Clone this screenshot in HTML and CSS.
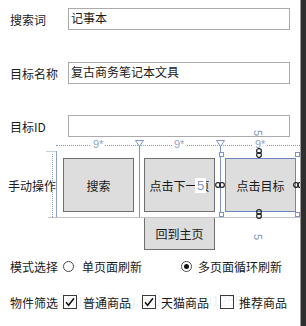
FILE: index.html
```html
<!DOCTYPE html>
<html lang="zh-CN">
<head>
    <meta charset="UTF-8">
    <title>任务设置</title>
    <link rel="stylesheet" href="styles.css">
</head>
<body>
<div class="page">
    <div class="field">
        <span class="field-label">搜索词</span>
        <div class="field-input">记事本</div>
    </div>
    <div class="field field-gap">
        <span class="field-label">目标名称</span>
        <div class="field-input">复古商务笔记本文具</div>
    </div>
    <div class="field field-gap-sm">
        <span class="field-label">目标ID</span>
        <div class="field-input"></div>
    </div>

    <div class="manual">
        <div class="manual-label">手动操作</div>
        <div class="manual-grid">
            <div class="btn">搜索</div>
            <div class="btn">点击下一页</div>
            <div class="btn btn-selected">点击目标</div>
            <div class="btn btn-home">回到主页</div>
        </div>
    </div>

    <div class="choice-row">
        <span class="choice-label">模式选择</span>
        <label class="choice choice-radio-1"><span class="radio"></span>单页面刷新</label>
        <label class="choice choice-radio-2"><span class="radio radio-on"><span class="radio-dot"></span></span>多页面循环刷新</label>
    </div>
    <div class="choice-row choice-row-2">
        <span class="choice-label">物件筛选</span>
        <label class="choice choice-check-1"><span class="check"><svg width="12" height="12" viewBox="0 0 12 12"><path d="M2 6.2 L4.6 9.2 L10 2.2" fill="none" stroke="#111" stroke-width="1.5"/></svg></span>普通商品</label>
        <label class="choice choice-check-2"><span class="check"><svg width="12" height="12" viewBox="0 0 12 12"><path d="M2 6.2 L4.6 9.2 L10 2.2" fill="none" stroke="#111" stroke-width="1.5"/></svg></span>天猫商品</label>
        <label class="choice choice-check-3"><span class="check"></span>推荐商品</label>
    </div>

    <!-- designer adorners drawn over the grid -->
    <div class="adorn col-header"></div>
    <span class="adorn star" style="left: 91px;">9*</span>
    <span class="adorn star" style="left: 172px;">9*</span>
    <span class="adorn star" style="left: 253px;">9*</span>
    <svg class="adorn tri" style="left: 135px;" width="9" height="7"><path d="M0.5 0.5 H8.5 L4.5 6.5 Z" fill="#fff" stroke="#7b93c6"/></svg>
    <svg class="adorn tri" style="left: 216px;" width="9" height="7"><path d="M0.5 0.5 H8.5 L4.5 6.5 Z" fill="#fff" stroke="#7b93c6"/></svg>
    <div class="adorn col-line" style="left: 139px;"></div>
    <div class="adorn col-line" style="left: 220px;"></div>
    <div class="adorn row-head"></div>
    <div class="adorn row-dots"></div>
    <div class="adorn row-tick"></div>
    <div class="adorn row-line"></div>

    <div class="adorn handle" style="left: 219px; top: 152px;"></div>
    <div class="adorn handle" style="left: 295px; top: 152px;"></div>
    <div class="adorn handle" style="left: 219px; top: 212px;"></div>
    <div class="adorn handle" style="left: 295px; top: 212px;"></div>

    <svg class="adorn" style="left: 256px; top: 148px;" width="6" height="10" viewBox="0 0 6 10"><rect x="0.7" y="0.7" width="4.6" height="4.6" rx="2" fill="none" stroke="#222" stroke-width="1.2"/><rect x="0.7" y="4.7" width="4.6" height="4.6" rx="2" fill="none" stroke="#222" stroke-width="1.2"/></svg>
    <svg class="adorn" style="left: 256px; top: 209px;" width="6" height="10" viewBox="0 0 6 10"><rect x="0.7" y="0.7" width="4.6" height="4.6" rx="2" fill="none" stroke="#222" stroke-width="1.2"/><rect x="0.7" y="4.7" width="4.6" height="4.6" rx="2" fill="none" stroke="#222" stroke-width="1.2"/></svg>
    <svg class="adorn" style="left: 215px; top: 182px;" width="10" height="6" viewBox="0 0 10 6"><rect x="0.7" y="0.7" width="4.6" height="4.6" rx="2" fill="none" stroke="#222" stroke-width="1.2"/><rect x="4.7" y="0.7" width="4.6" height="4.6" rx="2" fill="none" stroke="#222" stroke-width="1.2"/></svg>
    <svg class="adorn" style="left: 293px; top: 182px;" width="10" height="6" viewBox="0 0 10 6"><rect x="0.7" y="0.7" width="4.6" height="4.6" rx="2" fill="none" stroke="#222" stroke-width="1.2"/><rect x="4.7" y="0.7" width="4.6" height="4.6" rx="2" fill="none" stroke="#222" stroke-width="1.2"/></svg>

    <span class="adorn margin-num margin-turn" style="left: 255px; top: 127px;">5</span>
    <span class="adorn margin-num margin-turn" style="left: 255px; top: 231px;">5</span>
    <span class="adorn margin-num margin-flat" style="left: 195px; top: 178px;">5</span>

    <div class="watermark">https://blog.csdn.net/u012553593</div>
    <div class="edge"></div>
</div>
</body>
</html>
```

FILE: styles.css
```css
body {
    margin: 0;
    background: #fff;
}
.page {
    position: relative;
    width: 306px;
    height: 326px;
    overflow: hidden;
    padding-top: 8px;
    box-sizing: border-box;
    font-family: "Noto Sans CJK SC", "Noto Sans", sans-serif;
    font-size: 12px;
    color: #1a1a1a;
}
.field {
    display: flex;
    align-items: center;
    height: 22px;
    margin-left: 10px;
}
.field-gap {
    margin-top: 32px;
}
.field-gap-sm {
    margin-top: 31px;
}
.field-label {
    width: 58px;
    white-space: nowrap;
}
.field-input {
    width: 222px;
    height: 22px;
    box-sizing: border-box;
    border: 1px solid #ababab;
    padding: 0 2px;
    line-height: 17px;
}

.manual {
    display: flex;
    margin-top: 16px;
}
.manual-label {
    width: 50px;
    height: 64px;
    margin-left: 8px;
    display: flex;
    align-items: center;
    white-space: nowrap;
}
.manual-grid {
    display: grid;
    grid-template-columns: repeat(3, 81px);
    grid-template-rows: 64px 33px;
}
.btn {
    margin: 5px;
    background: #dddddd;
    border: 1px solid #707070;
    display: flex;
    align-items: center;
    justify-content: center;
    white-space: nowrap;
    overflow: hidden;
}
.btn-selected {
    border-color: #6a85c0;
}
.btn-home {
    grid-column: 2;
    margin: 0 5px;
}

.choice-row {
    display: flex;
    align-items: center;
    height: 16px;
    margin: 8px 0 0 10px;
}
.choice-row-2 {
    margin-top: 20px;
}
.choice-label {
    width: 53px;
    white-space: nowrap;
}
.choice {
    display: flex;
    align-items: center;
    white-space: nowrap;
}
.choice-radio-1 {
    width: 118px;
    gap: 8px;
}
.choice-radio-2 {
    gap: 6px;
}
.choice-check-1 {
    width: 79px;
    gap: 6px;
}
.choice-check-2 {
    width: 78px;
    gap: 5px;
}
.choice-check-3 {
    gap: 5px;
}
.radio {
    width: 11px;
    height: 11px;
    box-sizing: border-box;
    border: 1px solid #4a4a4a;
    border-radius: 50%;
    display: flex;
    align-items: center;
    justify-content: center;
}
.radio-dot {
    width: 5px;
    height: 5px;
    border-radius: 50%;
    background: #111;
}
.check {
    width: 14px;
    height: 14px;
    box-sizing: border-box;
    border: 1px solid #3a3a3a;
    display: flex;
    align-items: center;
    justify-content: center;
}

.adorn {
    position: absolute;
}
.col-header {
    left: 56px;
    top: 145px;
    width: 246px;
    border-top: 1px dotted #8496c0;
}
.star {
    top: 137px;
    padding: 0 2px;
    background: #fff;
    color: #93a4c8;
    font-family: "Liberation Sans", sans-serif;
    font-size: 11px;
    line-height: 14px;
}
.tri {
    top: 140px;
}
.col-line {
    top: 146px;
    width: 1px;
    height: 71px;
    background: #7b93c6;
}
.row-head {
    left: 56px;
    top: 151px;
    width: 1px;
    height: 66px;
    background: #8ea1c9;
}
.row-dots {
    left: 52px;
    top: 154px;
    height: 63px;
    border-left: 1px dotted #8496c0;
}
.row-tick {
    left: 46px;
    top: 151px;
    width: 10px;
    height: 1px;
    background: #c5cde0;
}
.row-line {
    left: 48px;
    top: 217px;
    width: 254px;
    height: 1px;
    background: #c4c4c4;
}
.handle {
    width: 5px;
    height: 5px;
    box-sizing: border-box;
    border: 1px solid #7b93c6;
    background: #fff;
}
.margin-num {
    color: #8194c2;
    font-family: "Liberation Sans", sans-serif;
    line-height: 12px;
}
.margin-turn {
    font-size: 11px;
    transform: rotate(90deg);
}
.margin-flat {
    padding: 0 2px;
    background: #fff;
    font-size: 13px;
    line-height: 15px;
}
.watermark {
    position: absolute;
    left: 67px;
    top: 293px;
    font-family: "Liberation Sans", sans-serif;
    font-size: 14px;
    color: rgba(0, 0, 0, 0.08);
    white-space: nowrap;
}
.edge {
    position: absolute;
    top: 0;
    right: 0;
    width: 5px;
    height: 100%;
    background: #2f2f2f;
    border-left: 1px solid #9a9a9a;
}
```
